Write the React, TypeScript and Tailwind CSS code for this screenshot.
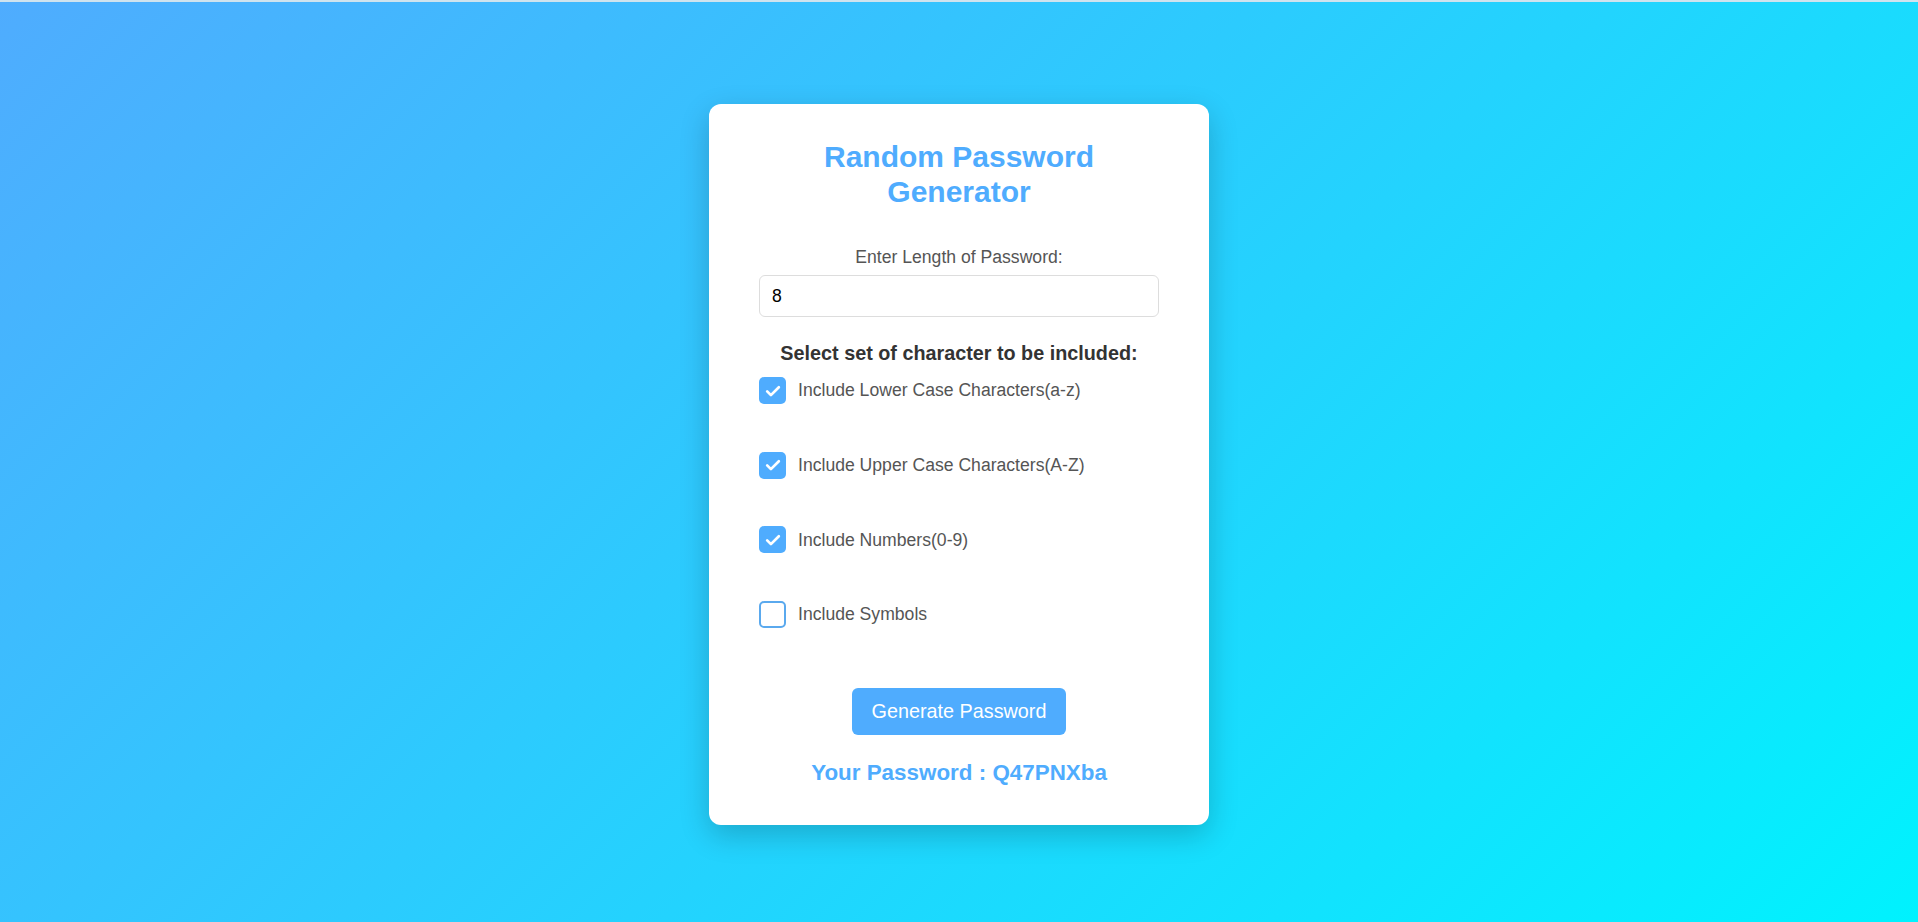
import React, { useState } from "react";

type Option = {
  id: string;
  label: string;
};

const options: Option[] = [
  { id: "lower", label: "Include Lower Case Characters(a-z)" },
  { id: "upper", label: "Include Upper Case Characters(A-Z)" },
  { id: "numbers", label: "Include Numbers(0-9)" },
  { id: "symbols", label: "Include Symbols" },
];

function CheckBox({ checked, onToggle }: { checked: boolean; onToggle: () => void }) {
  return (
    <div
      onClick={onToggle}
      className={`w-[27px] h-[27px] rounded-[5px] flex items-center justify-center cursor-pointer shrink-0 ${
        checked ? "bg-[#4facfe]" : "bg-white border-2 border-[#5aa9ee]"
      }`}
    >
      {checked && (
        <svg width="20" height="20" viewBox="0 0 24 24" fill="none">
          <path
            d="M5 12.5l4.5 4.5L19 7.5"
            stroke="white"
            strokeWidth="3.2"
            strokeLinecap="round"
            strokeLinejoin="round"
          />
        </svg>
      )}
    </div>
  );
}

export default function App() {
  // which character sets are ticked
  const [checked, setChecked] = useState<Record<string, boolean>>({
    lower: true,
    upper: true,
    numbers: true,
    symbols: false,
  });
  const [length, setLength] = useState("8");
  const [password] = useState("Q47PNXba");

  return (
    <div className="min-h-screen font-['Liberation_Sans',Arial,sans-serif]">
      {/* thin strip at the very top */}
      <div className="h-[2px] bg-[#cfe3ee]" />
      <div className="h-[920px] bg-[linear-gradient(135deg,#4facfe,#00f2fe)] flex justify-center items-start pt-[102px]">
        <div className="w-[500px] bg-white rounded-[12px] shadow-[0_10px_30px_rgba(0,0,0,0.2)] px-[50px] pt-[36px] pb-[39px] flex flex-col items-center">
          <h1 className="text-[30px] leading-[34.5px] font-bold text-[#4facfe] text-center">
            Random Password Generator
          </h1>

          <label className="mt-[38px] text-[17.6px] leading-[20.2px] text-[#555]">
            Enter Length of Password:
          </label>
          <input
            value={length}
            onChange={(e) => setLength(e.target.value)}
            className="mt-[8px] w-full h-[42px] shrink-0 border border-[#dddddd] rounded-[6px] px-[12px] text-[17.6px] text-black outline-none"
          />

          <h3 className="mt-[25px] text-[19.8px] leading-[22.8px] font-bold text-[#333]">
            Select set of character to be included:
          </h3>

          {/* list of character set options */}
          <div className="mt-[12px] w-full flex flex-col gap-[47.7px]">
            {options.map((opt) => (
              <div key={opt.id} className="flex items-center gap-[12px] h-[27px]">
                <CheckBox
                  checked={checked[opt.id]}
                  onToggle={() => setChecked({ ...checked, [opt.id]: !checked[opt.id] })}
                />
                <span className="text-[17.6px] leading-[20.2px] text-[#555]">{opt.label}</span>
              </div>
            ))}
          </div>

          <button className="mt-[60px] w-[214px] h-[47px] shrink-0 bg-[#4facfe] rounded-[6px] text-white text-[19.8px] leading-[22.8px]">
            Generate Password
          </button>

          <h3 className="mt-[25px] text-[22.4px] leading-[25.8px] font-bold text-[#4facfe]">
            Your Password : {password}
          </h3>
        </div>
      </div>
    </div>
  );
}
